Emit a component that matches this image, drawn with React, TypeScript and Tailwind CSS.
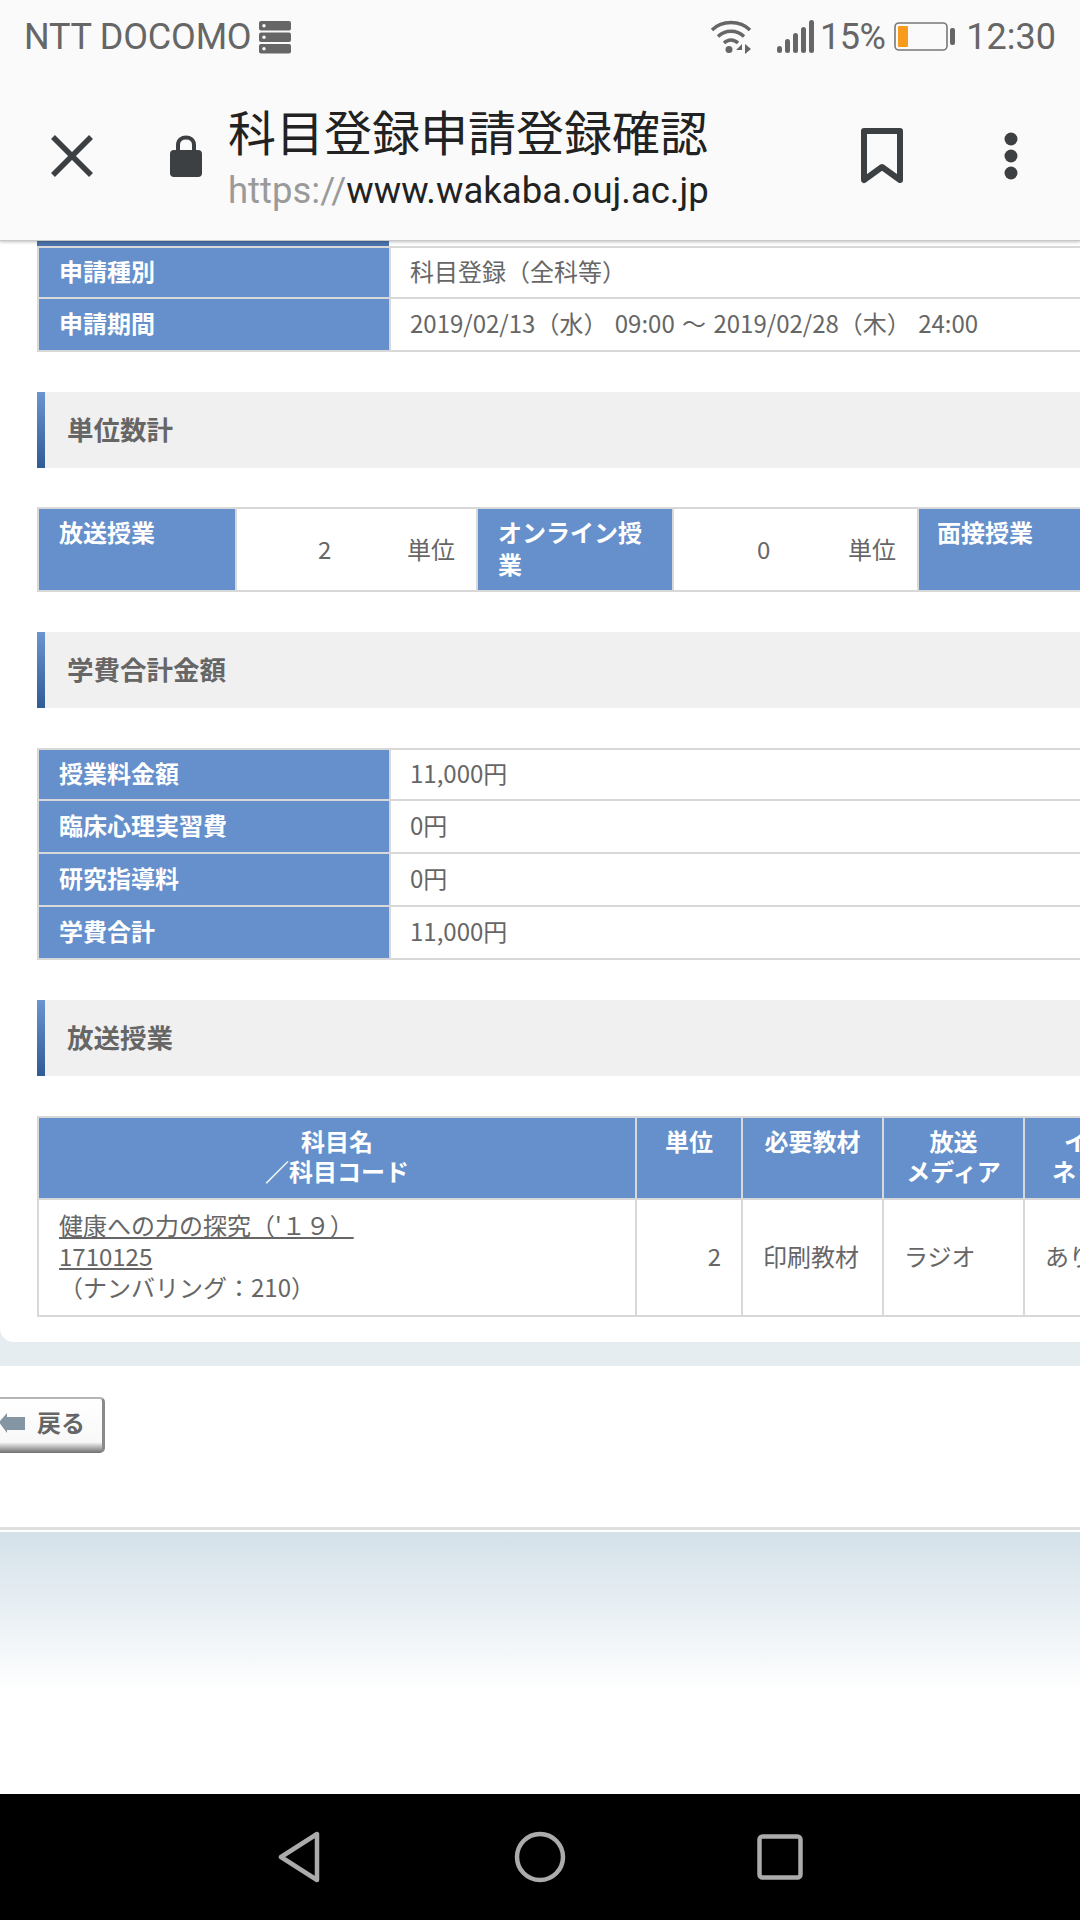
const JP = "font-['Noto_Sans_CJK_JP','Roboto',sans-serif]";

function Section({ title }: { title: string }) {
  return (
    <div className="flex h-[76px] w-[1043px] bg-[#f0f0f0]">
      <div className="w-2 bg-gradient-to-b from-[#6c95cf] to-[#2f5b96]" />
      <div className="pl-[22px] pt-[19px] text-[26.5px] leading-[36px] font-bold text-[#666666]">{title}</div>
    </div>
  );
}

function KV({ k, v, top }: { k: string; v: string; top?: boolean }) {
  return (
    <div className={`flex h-[53px] border-b-2 border-[#d8d8d8] ${top ? "border-t-2" : ""}`}>
      <div className="w-[352px] shrink-0 bg-[#6590cb] border-l-2 border-[#d8d8d8] pl-[20px] pb-[4px] flex items-center text-[24px] font-bold text-white">{k}</div>
      <div className="flex-1 bg-white border-l-2 border-[#d8d8d8] pl-[19px] pb-[4px] flex items-center text-[24px] text-[#666666] whitespace-nowrap [word-spacing:2px]">{v}</div>
    </div>
  );
}

function HeadCell({ w, children }: { w: string; children: React.ReactNode }) {
  return (
    <div className={`${w} shrink-0 bg-[#6590cb] border-r-2 border-[#d8d8d8] pt-[8px] text-center text-[24px] leading-[30px] font-bold text-white whitespace-nowrap overflow-hidden`}>
      {children}
    </div>
  );
}

function BodyCell({ w, cls, children }: { w: string; cls?: string; children: React.ReactNode }) {
  return (
    <div className={`${w} shrink-0 border-r-2 border-[#d8d8d8] pb-[4px] flex items-center text-[24px] text-[#666666] whitespace-nowrap overflow-hidden ${cls ?? ""}`}>
      {children}
    </div>
  );
}

export default function App() {
  return (
    <div className={`w-[1080px] h-[1920px] flex flex-col overflow-hidden bg-white ${JP}`}>
      {/* Status + browser chrome */}
      <header className="h-[241px] shrink-0 bg-[#fafafa] border-b border-[#c8c8c8] shadow-[0_1px_3px_rgba(0,0,0,0.25)] relative z-10">
        <div className="h-[74px] flex items-center font-['Roboto',sans-serif] text-[36px] text-[#666666] pl-[24px] pr-[24px]">
          <span className="tracking-[-0.2px]">NTT DOCOMO</span>
          <svg width="32" height="33" viewBox="0 0 32 33" className="ml-[8px]">
            <g fill="#666666">
              <rect x="0" y="0" width="32" height="9.5" rx="2" />
              <rect x="0" y="11.5" width="32" height="9.5" rx="2" />
              <rect x="0" y="23" width="32" height="9.5" rx="2" />
            </g>
            <g fill="#fafafa">
              <circle cx="5" cy="4.7" r="1.7" />
              <circle cx="5" cy="16.2" r="1.7" />
              <circle cx="5" cy="27.7" r="1.7" />
            </g>
          </svg>
          <div className="flex-1" />
          <svg width="44" height="36" viewBox="0 0 44 36">
            <g fill="none" stroke="#666666" strokeWidth="3.4">
              <path d="M2 11 C 12 1, 30 1, 40 11" />
              <path d="M8 17.5 C 15 10.5, 27 10.5, 34 17.5" />
              <path d="M14 24 C 18 20, 24 20, 28 24" />
            </g>
            <circle cx="19" cy="30.5" r="3.5" fill="#666666" />
            <path d="M32 25 L26 31 H32 Z M35 25 V35 L41 30 Z" fill="#666666" />
          </svg>
          <svg width="38" height="34" viewBox="0 0 38 34" className="ml-[23px]">
            <g fill="#666666">
              <rect x="0" y="26" width="5" height="7" rx="2.5" />
              <rect x="8" y="19" width="5" height="14" rx="2.5" />
              <rect x="16" y="13" width="5" height="20" rx="2.5" />
              <rect x="24" y="7" width="5" height="26" rx="2.5" />
              <rect x="32" y="0" width="5" height="33" rx="2.5" />
            </g>
          </svg>
          <span className="ml-[5px] tracking-[-0.5px]">15%</span>
          <svg width="62" height="30" viewBox="0 0 62 30" className="ml-[9px]">
            <rect x="1" y="1" width="52" height="27" rx="4" fill="#fafafa" stroke="#777777" strokeWidth="1.6" />
            <rect x="4" y="4" width="10" height="21" rx="1" fill="#f89b1c" />
            <rect x="56" y="6" width="5" height="17" rx="2" fill="#666666" />
          </svg>
          <span className="ml-[10px]">12:30</span>
        </div>
        <div className="h-[165px] relative">
          <div className="flex items-start">
            <svg width="44" height="44" viewBox="0 0 44 44" className="ml-[50px] mt-[60px]">
              <path d="M3 3 L41 41 M41 3 L3 41" stroke="#3c4043" strokeWidth="5.5" fill="none" />
            </svg>
            <svg width="34" height="44" viewBox="0 0 34 44" className="ml-[75px] mt-[60px]">
              <path d="M9 18 V11 C9 1, 25 1, 25 11 V18" fill="none" stroke="#3c4043" strokeWidth="4" />
              <rect x="1" y="16" width="32" height="27" rx="4" fill="#3c4043" />
            </svg>
            <div className="ml-[25px] mt-[26px] w-[500px]">
              <div className="text-[48px] leading-[60px] text-[#222222] whitespace-nowrap">科目登録申請登録確認</div>
              <div className="font-['Roboto',sans-serif] text-[36.5px] leading-[48px] mt-[7px] whitespace-nowrap text-[#222222]">
                <span className="text-[#9a9a9a]">https://</span>www.wakaba.ouj.ac.jp
              </div>
            </div>
            <svg width="44" height="56" viewBox="0 0 44 56" className="ml-[132px] mt-[54px]">
              <path d="M4 3 H40 V52 L22 39 L4 52 Z" fill="none" stroke="#3c4043" strokeWidth="6" strokeLinejoin="round" />
            </svg>
            <svg width="14" height="50" viewBox="0 0 14 50" className="ml-[100px] mt-[58px]">
              <g fill="#3c4043">
                <circle cx="7" cy="7" r="6.5" />
                <circle cx="7" cy="24" r="6.5" />
                <circle cx="7" cy="41" r="6.5" />
              </g>
            </svg>
          </div>
        </div>
      </header>

      {/* Web page */}
      <main className="flex-1 overflow-hidden flex flex-col">
        <div className="bg-[#e6edf0] pb-[24px] shrink-0">
          <div className="bg-white rounded-bl-[14px] pl-[37px] h-[1101px] w-[1080px] overflow-hidden">
            <div className="h-[5px] w-[352px] bg-[#4a73ad]" />
            <KV k="申請種別" v="科目登録（全科等）" top />
            <KV k="申請期間" v="2019/02/13（水） 09:00 ～ 2019/02/28（木） 24:00" />

            <div className="mt-[40px]">
              <Section title="単位数計" />
            </div>

            <div className="mt-[39px] flex h-[85px] w-[1043px] border-y-2 border-[#d8d8d8]">
              <div className="w-[198px] shrink-0 bg-[#6590cb] border-l-2 border-[#d8d8d8] pl-[20px] pt-[7px] text-[24px] leading-[32px] font-bold text-white">放送授業</div>
              <div className="w-[241px] shrink-0 flex items-center border-l-2 border-[#d8d8d8] pb-[2px] text-[24px] text-[#666666]">
                <span className="ml-[81px] w-[16px]">2</span>
                <span className="ml-[73px]">単位</span>
              </div>
              <div className="w-[198px] shrink-0 bg-[#6590cb] border-x-2 border-[#d8d8d8] pl-[20px] pr-[8px] pt-[7px] text-[24px] leading-[32px] font-bold text-white">オンライン授業</div>
              <div className="w-[243px] shrink-0 flex items-center pb-[2px] text-[24px] text-[#666666]">
                <span className="ml-[83px] w-[16px]">0</span>
                <span className="ml-[75px]">単位</span>
              </div>
              <div className="flex-1 bg-[#6590cb] border-l-2 border-[#d8d8d8] pl-[18px] pt-[7px] text-[24px] leading-[32px] font-bold text-white">面接授業</div>
            </div>

            <div className="mt-[40px]">
              <Section title="学費合計金額" />
            </div>

            <div className="mt-[40px] w-[1043px]">
              <KV k="授業料金額" v="11,000円" top />
              <KV k="臨床心理実習費" v="0円" />
              <KV k="研究指導料" v="0円" />
              <KV k="学費合計" v="11,000円" />
            </div>

            <div className="mt-[40px]">
              <Section title="放送授業" />
            </div>

            <div className="mt-[40px] w-[1160px] border-t-2 border-l-2 border-b-2 border-[#d8d8d8]">
              <div className="flex h-[82px] border-b-2 border-[#d8d8d8]">
                <HeadCell w="w-[598px]">
                  科目名
                  <br />
                  ／科目コード
                </HeadCell>
                <HeadCell w="w-[106px]">単位</HeadCell>
                <HeadCell w="w-[141px]">必要教材</HeadCell>
                <HeadCell w="w-[141px]">
                  放送
                  <br />
                  メディア
                </HeadCell>
                <div className="w-[126px] shrink-0 bg-[#6590cb] pt-[8px] text-center text-[24px] leading-[30px] font-bold text-white whitespace-nowrap overflow-hidden">
                  イン
                  <br />
                  ネット
                </div>
              </div>
              <div className="flex h-[115px]">
                <BodyCell w="w-[598px]" cls="pl-[20px]">
                  <div className="leading-[31px]">
                    <div><span className="underline">健康への力の探究（&apos;１９）</span></div>
                    <div><span className="underline">1710125</span></div>
                    <div>（ナンバリング：210）</div>
                  </div>
                </BodyCell>
                <BodyCell w="w-[106px]" cls="justify-end pr-[20px]">2</BodyCell>
                <BodyCell w="w-[141px]" cls="pl-[20px]">印刷教材</BodyCell>
                <BodyCell w="w-[141px]" cls="pl-[20px]">ラジオ</BodyCell>
                <div className="flex-1 pl-[20px] pb-[4px] flex items-center text-[24px] text-[#666666] whitespace-nowrap overflow-hidden">あり</div>
              </div>
            </div>
          </div>
        </div>

        <div className="h-[161px] shrink-0 pt-[31px]">
          <div className="relative w-[105px] h-[56px] rounded-r-[5px] bg-gradient-to-b from-[#ffffff] via-[#f8f8f8] via-80% to-[#6f6f6f] border-t-2 border-r-[3px] border-[#b5b5b5] border-r-[#8a8a8a] overflow-hidden flex items-center pb-[9px]">
            <svg width="26" height="26" viewBox="0 0 26 26" className="shrink-0 -ml-[1px]">
              <path d="M0 13 L8 4 V8 H26 V21 H8 V24 Z" fill="#8496a3" />
            </svg>
            <span className="ml-[12px] text-[24px] font-bold text-[#666666] leading-none">戻る</span>
          </div>
        </div>

        <div className="h-[3px] shrink-0 bg-[#dfdfdf]" />
        <div className="h-[2px] shrink-0 bg-white" />
        <div className="h-[160px] shrink-0 bg-gradient-to-b from-[#d4e1e9] to-white" />
        <div className="flex-1 bg-white" />
      </main>

      {/* Android nav */}
      <footer className="h-[126px] shrink-0 bg-black flex items-start">
        <svg width="46" height="52" viewBox="0 0 46 52" className="ml-[277px] mt-[37px]">
          <path d="M4 26 L40 3 V49 Z" fill="none" stroke="#ababab" strokeWidth="4.5" strokeLinejoin="round" />
        </svg>
        <svg width="52" height="52" viewBox="0 0 52 52" className="ml-[191px] mt-[37px]">
          <circle cx="26" cy="26" r="23" fill="none" stroke="#ababab" strokeWidth="4.5" />
        </svg>
        <svg width="46" height="46" viewBox="0 0 46 46" className="ml-[191px] mt-[40px]">
          <rect x="2.5" y="2.5" width="41" height="41" rx="3" fill="none" stroke="#ababab" strokeWidth="4.5" />
        </svg>
      </footer>
    </div>
  );
}
